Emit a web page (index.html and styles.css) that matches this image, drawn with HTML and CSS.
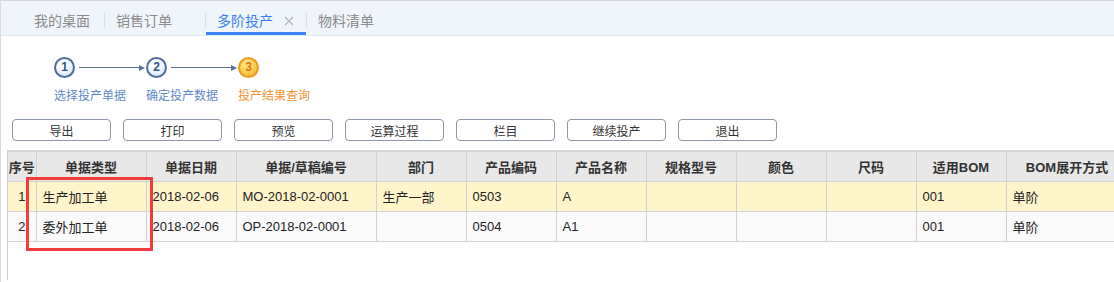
FILE: index.html
```html
<!DOCTYPE html>
<html lang="zh-CN">
<head>
  <meta charset="UTF-8">
  <title>多阶投产</title>
  <link rel="stylesheet" href="styles.css">
</head>
<body>
  <div class="page">

    <div class="tabs">
      <div class="tab first">我的桌面</div>
      <span class="sep"></span>
      <div class="tab">销售订单</div>
      <span class="sep"></span>
      <div class="tab active">多阶投产
        <svg class="close" width="10" height="10" viewBox="0 0 10 10"><path d="M1 1L9 9M9 1L1 9" stroke="#b8b8b8" stroke-width="1.4"/></svg>
      </div>
      <span class="sep"></span>
      <div class="tab">物料清单</div>
    </div>

    <div class="steps">
      <div class="step">
        <div class="step-head"><span class="num">1</span><span class="arrow"><i class="line"></i><i class="head"></i></span></div>
        <div class="step-label">选择投产单据</div>
      </div>
      <div class="step">
        <div class="step-head"><span class="num">2</span><span class="arrow"><i class="line"></i><i class="head"></i></span></div>
        <div class="step-label">确定投产数据</div>
      </div>
      <div class="step current">
        <div class="step-head"><span class="num">3</span></div>
        <div class="step-label">投产结果查询</div>
      </div>
    </div>

    <div class="toolbar">
      <button class="btn">导出</button>
      <button class="btn">打印</button>
      <button class="btn">预览</button>
      <button class="btn">运算过程</button>
      <button class="btn">栏目</button>
      <button class="btn">继续投产</button>
      <button class="btn">退出</button>
    </div>

    <div class="grid">
      <table>
        <colgroup>
          <col style="width:28px"><col style="width:110px"><col style="width:90px"><col style="width:140px">
          <col style="width:90px"><col style="width:90px"><col style="width:90px"><col style="width:90px">
          <col style="width:90px"><col style="width:90px"><col style="width:90px"><col style="width:122px">
        </colgroup>
        <thead>
          <tr>
            <th>序号</th><th>单据类型</th><th>单据日期</th><th>单据/草稿编号</th><th>部门</th><th>产品编码</th>
            <th>产品名称</th><th>规格型号</th><th>颜色</th><th>尺码</th><th>适用BOM</th><th>BOM展开方式</th>
          </tr>
        </thead>
        <tbody>
          <tr class="selected">
            <td class="no">1</td><td>生产加工单</td><td>2018-02-06</td><td>MO-2018-02-0001</td><td>生产一部</td><td>0503</td>
            <td>A</td><td></td><td></td><td></td><td>001</td><td>单阶</td>
          </tr>
          <tr>
            <td class="no">2</td><td>委外加工单</td><td>2018-02-06</td><td>OP-2018-02-0001</td><td></td><td>0504</td>
            <td>A1</td><td></td><td></td><td></td><td>001</td><td>单阶</td>
          </tr>
        </tbody>
      </table>
    </div>

    <!-- 标注框 -->
    <div class="mark"></div>
  </div>
</body>
</html>
```

FILE: styles.css
```css
* {
  box-sizing: border-box;
}

body {
  margin: 0;
  font-family: "Liberation Sans", "Noto Sans CJK SC", sans-serif;
  color: #222;
  background: #fff;
  overflow: hidden;
}

.page {
  position: relative;
  height: 282px;
  border-left: 1px solid #dcdcdc;
}

/* 顶部页签 */
.tabs {
  display: flex;
  align-items: flex-start;
  height: 36px;
  padding-left: 22px;
  background: #f0f5fc;
  border-top: 1px solid #d6d6d6;
  border-bottom: 1px solid #dfe5ee;
}

.tab {
  display: flex;
  align-items: flex-start;
  width: 100px;
  height: 34px;
  padding: 12px 0 0 11px;
  font-size: 14px;
  line-height: 16px;
  color: #8a8a8a;
}

.tab.first {
  width: 81px;
}

.tab.active {
  color: #3a7ef2;
  border-bottom: 3px solid #3a84f5;
}

.close {
  margin: 3px 0 0 11px;
}

.sep {
  width: 1px;
  height: 15px;
  margin-top: 12px;
  background: #dcdfe4;
}

/* 步骤条 */
.steps {
  display: grid;
  grid-template-columns: repeat(3, 92px);
  margin: 21px 0 0 53px;
}

.step-head {
  display: flex;
  align-items: center;
  height: 21px;
}

.num {
  width: 21px;
  height: 21px;
  border: 2px solid #4f6d9b;
  border-radius: 50%;
  background: radial-gradient(circle at 40% 30%, #ffffff 20%, #cfe1f7 100%);
  color: #2f5592;
  font-size: 12px;
  font-weight: bold;
  line-height: 17px;
  text-align: center;
}

.arrow {
  display: flex;
  align-items: center;
  width: 66px;
  margin-left: 4px;
}

.arrow .line {
  flex: 1;
  height: 1px;
  background: #5a7299;
}

.arrow .head {
  width: 0;
  height: 0;
  border-left: 6px solid #5a7299;
  border-top: 3.5px solid transparent;
  border-bottom: 3.5px solid transparent;
}

.step-label {
  margin-top: 10px;
  font-size: 12px;
  line-height: 16px;
  color: #5f89c6;
}

.step.current .num {
  border-color: #eb9b1e;
  background: radial-gradient(circle at 40% 30%, #ffe27a 15%, #f6ad22 100%);
  color: #e0720c;
}

.step.current .step-label {
  color: #f39434;
}

/* 按钮 */
.toolbar {
  display: flex;
  gap: 12px;
  margin: 15px 0 0 11px;
}

.btn {
  width: 99px;
  height: 22px;
  padding: 0;
  border: 1px solid #8c98aa;
  border-radius: 4px;
  background: #fff;
  font-family: inherit;
  font-size: 12px;
  color: #333;
}

/* 表格 */
.grid {
  height: 130px;
  margin: 9px 0 0 6px;
  border-left: 1px solid #cfcfcf;
  border-top: 2px solid #d3d3d3;
  overflow: hidden;
}

table {
  width: 1120px;
  table-layout: fixed;
  border-collapse: collapse;
  font-size: 13px;
}

th,
td {
  height: 29px;
  padding: 0 6px;
  border-right: 1px solid #d2d2d2;
  border-bottom: 1px solid #d2d2d2;
  white-space: nowrap;
  overflow: hidden;
}

th {
  background: #e8e8e8;
  color: #333;
  font-weight: bold;
  text-align: center;
  padding: 0;
}

td {
  height: 30px;
  text-align: left;
  background: #fafafa;
}

td.no {
  text-align: right;
  padding-right: 10px;
}

tr.selected td {
  background: #fff5cb;
}

.mark {
  position: absolute;
  left: 25px;
  top: 177px;
  width: 127px;
  height: 74px;
  border: 3px solid #f53c3c;
}
```
